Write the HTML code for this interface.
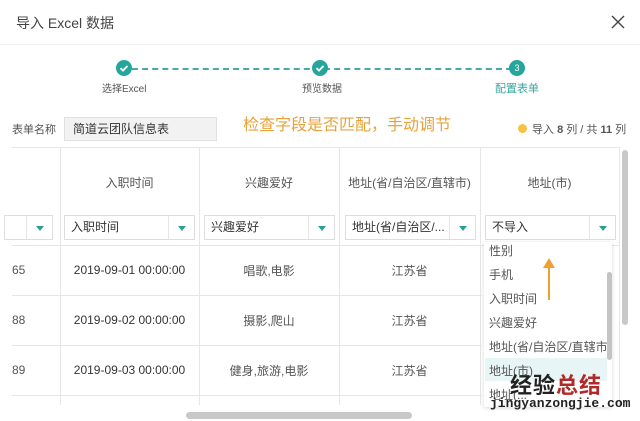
<!DOCTYPE html>
<html><head><meta charset="utf-8"><style>
*{margin:0;padding:0;box-sizing:border-box}
body{width:640px;height:421px;background:#fff;font-family:"Liberation Sans","Noto Sans CJK SC",sans-serif;color:#333;position:relative;overflow:hidden;font-size:12px}
.a{position:absolute;white-space:nowrap}
.c{text-align:center}
.vl{position:absolute;width:1px;background:#e6e6e6}
.hl{position:absolute;height:1px;background:#e6e6e6}
.sel{position:absolute;height:25px;border:1px solid #ddd;background:#fff;font-size:12px;line-height:23px;padding-left:6px}
.sel:after{content:"";position:absolute;right:0;top:0;width:25px;height:23px;border-left:1px solid #e6e6e6}
.tri{position:absolute;right:8px;top:10px;width:0;height:0;border-left:4px solid transparent;border-right:4px solid transparent;border-top:5px solid #2aa198;z-index:2}
.circ{position:absolute;width:16px;height:16px;border-radius:50%;background:#26a69a;color:#fff;font-size:9px;text-align:center;line-height:16px}
.dd{font-size:12px;color:#555;position:absolute;left:489px}
</style></head><body>
<div class="a" style="left:16px;top:13px;font-size:14px;color:#444">导入 Excel 数据</div>
<svg class="a" style="left:610px;top:14px" width="16" height="16"><path d="M2 2L14 14M14 2L2 14" stroke="#444" stroke-width="1.4"/></svg>
<div class="hl" style="left:0;top:44px;width:640px;background:#f0f0f0"></div>

<div class="a" style="left:132px;top:68px;width:380px;border-top:2px dashed #4aa9a0"></div>
<div class="circ" style="left:116px;top:60px"><svg width="16" height="16"><path d="M4.5 8.2l2.5 2.4 4.5-4.7" stroke="#fff" stroke-width="1.8" fill="none"/></svg></div>
<div class="circ" style="left:312px;top:60px"><svg width="16" height="16"><path d="M4.5 8.2l2.5 2.4 4.5-4.7" stroke="#fff" stroke-width="1.8" fill="none"/></svg></div>
<div class="circ" style="left:509px;top:60px">3</div>
<div class="a" style="left:102px;top:80px;font-size:10px;color:#555">选择Excel</div>
<div class="a" style="left:302px;top:80px;font-size:10px;color:#555">预览数据</div>
<div class="a" style="left:495px;top:80px;font-size:11px;color:#3aa6a0">配置表单</div>

<div class="a" style="left:12px;top:121px;font-size:11px;color:#555">表单名称</div>
<div class="a" style="left:64px;top:117px;width:153px;height:24px;background:#f2f2f2;border:1px solid #e0e0e0;font-size:12px;line-height:22px;padding-left:8px">简道云团队信息表</div>
<div class="a" style="left:243px;top:111px;font-size:16px;color:#e8a23a">检查字段是否匹配，手动调节</div>
<div class="a" style="left:518px;top:124px;width:9px;height:9px;border-radius:50%;background:#f6c343"></div>
<div class="a" style="left:532px;top:121px;font-size:11px;color:#555">导入 <b>8</b> 列 / 共 <b>11</b> 列</div>

<div class="hl" style="left:12px;top:147px;width:608px"></div>
<div class="hl" style="left:12px;top:245px;width:608px"></div>
<div class="hl" style="left:12px;top:295px;width:470px"></div>
<div class="hl" style="left:12px;top:345px;width:470px"></div>
<div class="hl" style="left:12px;top:395px;width:470px"></div>
<div class="vl" style="left:60px;top:147px;height:258px"></div>
<div class="vl" style="left:199px;top:147px;height:258px"></div>
<div class="vl" style="left:339px;top:147px;height:258px"></div>
<div class="vl" style="left:480px;top:147px;height:258px"></div>
<div class="vl" style="left:619px;top:147px;height:258px"></div>

<div class="a c" style="left:60px;top:174px;width:139px;color:#555">入职时间</div>
<div class="a c" style="left:199px;top:174px;width:140px;color:#555">兴趣爱好</div>
<div class="a c" style="left:339px;top:174px;width:141px;color:#555">地址(省/自治区/直辖市)</div>
<div class="a c" style="left:480px;top:174px;width:139px;color:#555">地址(市)</div>

<div class="sel" style="left:4px;top:215px;width:49px"><i class="tri"></i></div>
<div class="sel" style="left:64px;top:215px;width:131px">入职时间<i class="tri"></i></div>
<div class="sel" style="left:204px;top:215px;width:131px">兴趣爱好<i class="tri"></i></div>
<div class="sel" style="left:345px;top:215px;width:131px">地址(省/自治区/...<i class="tri"></i></div>
<div class="sel" style="left:485px;top:215px;width:131px">不导入<i class="tri"></i></div>

<div class="a" style="left:12px;top:263px;color:#555">65</div>
<div class="a" style="left:12px;top:313px;color:#555">88</div>
<div class="a" style="left:12px;top:363px;color:#555">89</div>
<div class="a c" style="left:60px;top:263px;width:139px">2019-09-01 00:00:00</div>
<div class="a c" style="left:60px;top:313px;width:139px">2019-09-02 00:00:00</div>
<div class="a c" style="left:60px;top:363px;width:139px">2019-09-03 00:00:00</div>
<div class="a c" style="left:199px;top:262px;width:140px;color:#555">唱歌,电影</div>
<div class="a c" style="left:199px;top:312px;width:140px;color:#555">摄影,爬山</div>
<div class="a c" style="left:199px;top:362px;width:140px;color:#555">健身,旅游,电影</div>
<div class="a c" style="left:339px;top:262px;width:141px;color:#555">江苏省</div>
<div class="a c" style="left:339px;top:312px;width:141px;color:#555">江苏省</div>
<div class="a c" style="left:339px;top:362px;width:141px;color:#555">江苏省</div>

<div class="a" style="left:484px;top:242px;width:128px;height:165px;background:#fff;box-shadow:0 1px 4px rgba(0,0,0,.15)"></div>
<div class="a" style="left:485px;top:358px;width:122px;height:23px;background:#e8f5f5"></div>
<div class="dd" style="top:242px">性别</div>
<div class="dd" style="top:266px">手机</div>
<div class="dd" style="top:290px">入职时间</div>
<div class="dd" style="top:314px">兴趣爱好</div>
<div class="dd" style="top:338px">地址(省/自治区/直辖市)</div>
<div class="dd" style="top:362px">地址(市)</div>
<div class="dd" style="top:386px">地址(...</div>
<div class="a" style="left:607px;top:272px;width:5px;height:88px;border-radius:3px;background:#c4c4c4"></div>

<svg class="a" style="left:541px;top:256px" width="16" height="46"><path d="M8 8V44" stroke="#f0a030" stroke-width="2"/><path d="M2 12L8 2 14 12Z" fill="#f0a030"/></svg>

<div class="a" style="left:622px;top:150px;width:6px;height:175px;border-radius:3px;background:#c8c8c8"></div>
<div class="a" style="left:186px;top:412px;width:226px;height:7px;border-radius:4px;background:#c8c8c8"></div>

<div class="a" style="left:510px;top:368px;font-size:22px;font-weight:bold;color:#222;letter-spacing:1px">经验<span style="color:#b02a2a">总结</span></div>
<div class="a" style="left:490px;top:396px;font-size:13px;font-family:'Liberation Mono',monospace;color:#222;font-weight:bold">jingyanzongjie.com</div>
</body></html>
